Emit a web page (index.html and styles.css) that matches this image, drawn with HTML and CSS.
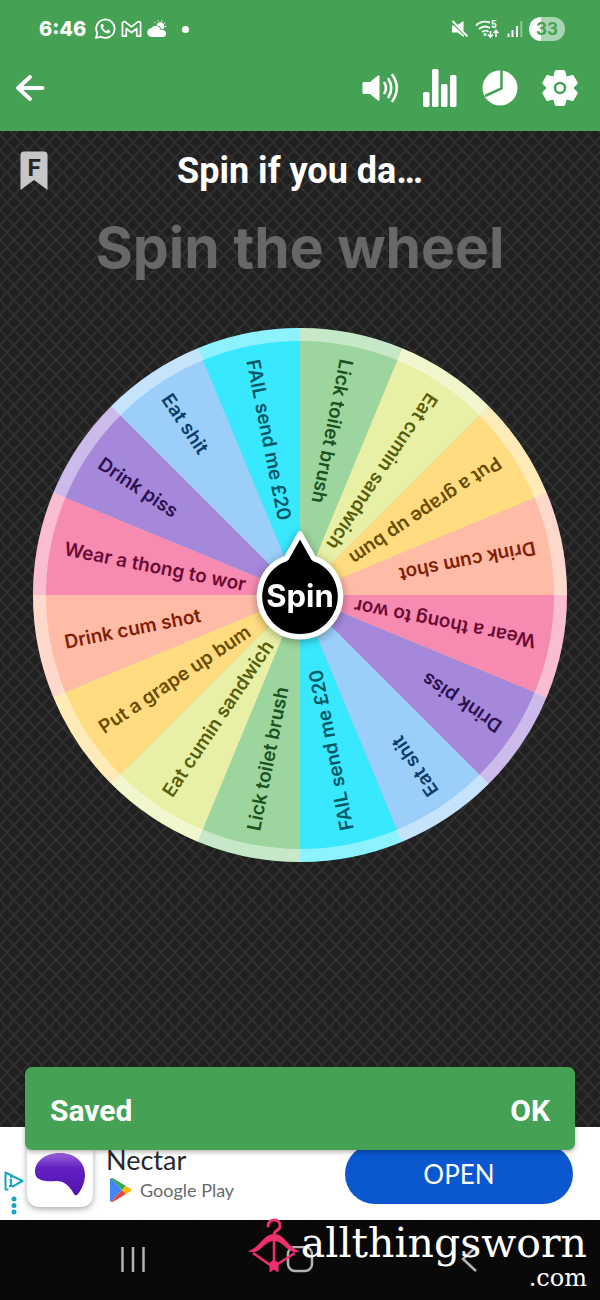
FILE: index.html
```html
<!doctype html>
<html lang="en">
<head>
<title>Spin the wheel</title>

<meta charset="utf-8">
<meta name="viewport" content="width=device-width, initial-scale=1">

<link rel="stylesheet" href="styles.css">
</head>

<body>

<header class="top">
	<div class="status-bar">
		<span class="clock">6:46</span>
		<svg class="status-icon" width="22" height="22" viewBox="0 0 22 22">
			<path d="M2 20l1.300-5A9.200 9.200 0 1 1 7 18.700z" fill="none" stroke="#fff" stroke-width="1.800" stroke-linejoin="round"/>
			<path d="M7.500 6c-1.500 1-1.300 3.200.3 5.400 2 2.800 4.600 4.400 6.700 3.800 1.600-.5 1.900-1.700 1.600-2.400l-2.300-1.200-1.300 1.400c-1.700-.6-3-2-3.600-3.300l1-1.300L8.900 6z" fill="#fff"/>
		</svg>
		<svg class="status-icon" width="21" height="18" viewBox="0 0 22 18">
			<path d="M1.500 3v13.500h4V8.500l5.500 4.300 5.500-4.300v8h4V3c0-1.800-2-2.200-3.300-1.200L11 6.800 4.800 1.800C3.500.8 1.500 1.200 1.500 3z" fill="none" stroke="#fff" stroke-width="1.800" stroke-linejoin="round"/>
		</svg>
		<svg class="status-icon" width="20" height="18" viewBox="0 0 20 18">
			<path d="M5 17a4.500 4.500 0 0 1-.5-9 5 5 0 0 1 9 2h2a3.500 3.500 0 0 1 0 7z" fill="#fff"/>
			<path d="M9.500 5.500a4 4 0 1 1 6.500 3.700h-1.500a6 6 0 0 0-5-3.700z" fill="#fff"/>
			<path d="M8.500 3l-1-1M11 1.500V.3M14.500 1.500l.5-1.200M17 3.500l1-.8M18 6.500h1.300" stroke="#fff" stroke-width="1"/>
		</svg>
		<span class="more-dot"></span>

		<span class="status-right">
			<svg width="18" height="18" viewBox="0 0 18 18">
				<path d="M1 5.500h2L13 15.500V17L6.500 12.500H1z" fill="#fff"/>
				<path d="M6.500 5L12.500 1v10z" fill="#fff"/>
				<path d="M1.500 1l15 15.500" stroke="#fff" stroke-width="1.800"/>
			</svg>
			<svg width="26" height="20" viewBox="0 0 26 20">
				<path d="M1 6.500C5 2.600 10 1.800 15 3.600M4 10c3-2.600 7-3.200 11-1M7 13c2-1.600 4.500-1.700 6.500-.3" fill="none" stroke="#fff" stroke-width="1.900"/>
				<circle cx="10" cy="15.500" r="1.500" fill="#fff"/>
				<path d="M15.500 12v6M13 15.500l2.500 2.700 2.500-2.700M21 18v-6M18.500 14l2.500-2.700L23.500 14" fill="none" stroke="#fff" stroke-width="1.500"/>
				<text class="wifi-gen" x="16" y="9">5</text>
			</svg>
			<svg width="16" height="18" viewBox="0 0 16 18">
				<path d="M1.500 13.500V17M5.500 10v7M10 6v11" stroke="#fff" stroke-width="2"/>
				<path d="M14.300 1v16" stroke="#fff" stroke-width="2" opacity=".4"/>
			</svg>
			<span class="battery">33</span>
		</span>
	</div>

	<nav class="toolbar">
		<button class="tool" type="button" aria-label="Back">
			<svg width="30" height="30" viewBox="0 0 30 30">
				<path d="M15 4L3 15l12 11M3.500 15H27.500" fill="none" stroke="#fff" stroke-width="3.800" stroke-linecap="round" stroke-linejoin="round"/>
			</svg>
		</button>
		<span class="spacer"></span>
		<button class="tool" type="button" aria-label="Sound">
			<svg width="38" height="38" viewBox="0 0 38 38">
				<path d="M3 13h6l8-6.500q1.500-1 1.500.7v23.600q0 1.700-1.500.7L9 25H3q-1.500 0-1.500-1.500v-9Q1.500 13 3 13z" fill="#fff"/>
				<path d="M23.500 14q3 5 0 10M27.500 10q5.500 9 0 18M31.500 6q8.500 13 0 26" fill="none" stroke="#fff" stroke-width="2.600" stroke-linecap="round"/>
			</svg>
		</button>
		<button class="tool" type="button" aria-label="Results">
			<svg width="38" height="38" viewBox="0 0 38 38">
				<g fill="#fff">
					<rect x="2" y="23" width="6.500" height="15" rx="1.800"/>
					<rect x="11" y="0" width="6.500" height="38" rx="1.800"/>
					<rect x="20" y="15" width="6.500" height="23" rx="1.800"/>
					<rect x="29" y="6" width="6.500" height="32" rx="1.800"/>
				</g>
			</svg>
		</button>
		<button class="tool" type="button" aria-label="Edit slices">
			<svg width="38" height="38" viewBox="0 0 38 38">
				<circle cx="19" cy="19" r="17.500" fill="#fff"/>
				<path d="M20.500 0v19.500L4 27" fill="none" stroke="#45a254" stroke-width="2.500"/>
			</svg>
		</button>
		<button class="tool" type="button" aria-label="Settings">
			<svg width="38" height="38" viewBox="0 0 38 38">
				<g fill="#fff" stroke="#fff" stroke-width="1" stroke-linejoin="round">
					<circle cx="19" cy="19" r="13"/>
					<path id="tooth" d="M12.500 9L14.300 2Q14.600 1.500 15.500 1.500h7q.9 0 1.200.5L25.500 9z"/>
					<use href="#tooth" transform="rotate(60 19 19)"/>
					<use href="#tooth" transform="rotate(120 19 19)"/>
					<use href="#tooth" transform="rotate(180 19 19)"/>
					<use href="#tooth" transform="rotate(240 19 19)"/>
					<use href="#tooth" transform="rotate(300 19 19)"/>
				</g>
				<circle cx="19" cy="19" r="5" fill="none" stroke="#45a254" stroke-width="2.500"/>
			</svg>
		</button>
	</nav>
</header>

<main class="content">
	<div class="wheel-head">
		<svg class="bookmark" width="28" height="40" viewBox="0 0 28 40">
			<path d="M4 0.500h20q3.500 0 3.500 3.500v35L14 29 .5 39V4Q.5.500 4 .5z" fill="#c6c6c6"/>
			<text class="bookmark-letter" x="14" y="25">F</text>
		</svg>
		<h2 class="wheel-name">Spin if you da…</h2>
	</div>

	<h1 class="prompt">Spin the wheel</h1>

	<div class="wheel-area">
		<svg class="wheel" viewBox="-267 -267 534 534">
			<defs>
				<path id="slice" d="M0 0L-261.870 -52.090A267 267 0 0 0 -261.870 52.090z"/>
			</defs>

			<!-- keeps the dark page from showing through the slice joints -->
			<circle class="base" r="266"/>

			<!-- every label starts near the rim and reads towards the hub -->
			<g class="peach" transform="rotate(-11.250)"><use href="#slice"/><text x="-240" y="7">Drink cum shot</text></g>
			<g class="yellow" transform="rotate(-33.750)"><use href="#slice"/><text x="-240" y="7">Put a grape up bum</text></g>
			<g class="lime" transform="rotate(-56.250)"><use href="#slice"/><text x="-240" y="7">Eat cumin sandwich</text></g>
			<g class="green" transform="rotate(-78.750)"><use href="#slice"/><text x="-240" y="7">Lick toilet brush</text></g>
			<g class="cyan" transform="rotate(-101.250)"><use href="#slice"/><text x="-240" y="7">FAIL send me £20</text></g>
			<g class="blue" transform="rotate(-123.750)"><use href="#slice"/><text x="-240" y="7">Eat shit</text></g>
			<g class="purple" transform="rotate(-146.250)"><use href="#slice"/><text x="-240" y="7">Drink piss</text></g>
			<g class="pink" transform="rotate(-168.750)"><use href="#slice"/><text x="-240" y="7">Wear a thong to wor</text></g>
			<g class="peach" transform="rotate(168.750)"><use href="#slice"/><text x="-240" y="7">Drink cum shot</text></g>
			<g class="yellow" transform="rotate(146.250)"><use href="#slice"/><text x="-240" y="7">Put a grape up bum</text></g>
			<g class="lime" transform="rotate(123.750)"><use href="#slice"/><text x="-240" y="7">Eat cumin sandwich</text></g>
			<g class="green" transform="rotate(101.250)"><use href="#slice"/><text x="-240" y="7">Lick toilet brush</text></g>
			<g class="cyan" transform="rotate(78.750)"><use href="#slice"/><text x="-240" y="7">FAIL send me £20</text></g>
			<g class="blue" transform="rotate(56.250)"><use href="#slice"/><text x="-240" y="7">Eat shit</text></g>
			<g class="purple" transform="rotate(33.750)"><use href="#slice"/><text x="-240" y="7">Drink piss</text></g>
			<g class="pink" transform="rotate(11.250)"><use href="#slice"/><text x="-240" y="7">Wear a thong to wor</text></g>

			<circle class="rim" r="260.500"/>
		</svg>

		<button class="spin" type="button">
			<svg width="100" height="132" viewBox="-50 -66 100 132">
				<path d="M0 -61L13.500 -37Q15 -36 20 -34A40.500 40.500 0 1 1 -20 -34Q-15 -36 -13.500 -37z" fill="#000" stroke="#fff" stroke-width="5.500" stroke-linejoin="round"/>
				<text class="spin-text" x="0" y="12">Spin</text>
			</svg>
		</button>
	</div>
</main>

<footer class="bottom">
	<section class="ad">
		<div class="ad-marks">
			<svg width="20" height="22" viewBox="0 0 20 22">
				<path d="M4.500 19.500h-3V2.500L18.500 11 8 16.800" fill="none" stroke="#18a5c0" stroke-width="2" stroke-linejoin="round"/>
				<path d="M7 6v2M5.500 10H7v6M5 16h4" fill="none" stroke="#18a5c0" stroke-width="2"/>
			</svg>
			<svg width="20" height="20" viewBox="0 0 20 20">
				<g fill="#18a5c0">
					<circle cx="10" cy="3" r="2.500"/>
					<circle cx="10" cy="9.500" r="2.500"/>
					<circle cx="10" cy="16" r="2.500"/>
				</g>
			</svg>
		</div>
		<div class="ad-icon">
			<svg width="66" height="66" viewBox="0 0 66 66">
				<defs>
					<linearGradient id="plum" x1="0" y1="0" x2="0" y2="1">
						<stop offset="0" stop-color="#9a63da"/>
						<stop offset=".35" stop-color="#6420c2"/>
						<stop offset="1" stop-color="#5312b0"/>
					</linearGradient>
				</defs>
				<path d="M8 31C8 19 20 12 33 12c15 0 25 9 25 22 0 9-5 17-8 20q-2 1-3-1c-5-9-10-13-18-13-10 1-21 0-21-9z" fill="url(#plum)"/>
			</svg>
		</div>
		<div class="ad-text">
			<span class="ad-name">Nectar</span>
			<span class="ad-store">
				<svg width="22" height="24" viewBox="0 0 22 24">
					<path d="M1 0L12 12 1 24Q0 23.500 0 22V2Q0 .5 1 0z" fill="#4285f4"/>
					<path d="M1 0q1-.3 2 .2L16 8l-4 4z" fill="#34a853"/>
					<path d="M1 24q1 .3 2-.2L16 16l-4-4z" fill="#ea4335"/>
					<path d="M16 8l5 3q1.300 1 0 2l-5 3-4-4z" fill="#fbbc04"/>
				</svg>
				Google Play
			</span>
		</div>
		<a class="ad-open" href="#">OPEN</a>
	</section>

	<div class="android-nav">
		<button class="nav-key" type="button" aria-label="Recents">
			<svg width="28" height="28" viewBox="0 0 28 28"><path d="M3.500 1v25M14 1v25M24.500 1v25" stroke="#b4b4b4" stroke-width="2.500"/></svg>
		</button>
		<button class="nav-key" type="button" aria-label="Home">
			<svg width="28" height="28" viewBox="0 0 28 28"><rect x="2" y="1" width="24" height="24" rx="7" fill="none" stroke="#b4b4b4" stroke-width="2.500"/></svg>
		</button>
		<button class="nav-key" type="button" aria-label="Back">
			<svg width="28" height="28" viewBox="0 0 28 28"><path d="M23 1L10 13l13 12" fill="none" stroke="#b4b4b4" stroke-width="2.500"/></svg>
		</button>
	</div>

	<div class="snackbar" role="status">
		<span>Saved</span>
		<button class="snackbar-ok" type="button">OK</button>
	</div>

	<div class="brand">
		<svg class="brand-mark" width="54" height="56" viewBox="0 0 54 56">
			<path d="M21 8c0-8 13-8 12 0 0 5-6 4-6 9" fill="none" stroke="#f0306c" stroke-width="3" stroke-linecap="round"/>
			<path d="M1 33C13 30 16 16 27 16s14 14 26 17c-3 2-8 1-11-1-6-5-9-9-15-9s-9 4-15 9c-3 2-8 3-11 1z" fill="#f0306c"/>
			<path d="M6 35l20 14L48 35M27 23v24" fill="none" stroke="#f0306c" stroke-width="2.500"/>
			<path d="M27 42l4 3v9l-4-3-4 3v-9z" fill="#f0306c" stroke="#f0306c"/>
		</svg>
		<div class="brand-text">
			<span class="brand-name">allthingsworn</span>
			<span class="brand-tld">.com</span>
		</div>
	</div>
</footer>

</body>
</html>
```

FILE: styles.css
```css
* {
	box-sizing: border-box;
}

body {
	display: flex;
	flex-direction: column;
	min-height: 100vh;
	margin: 0;
	font-family: Roboto, "Liberation Sans", sans-serif;
	color: #fff;
	background-color: #202020;
	background-image: url("data:image/svg+xml,%3Csvg xmlns='http://www.w3.org/2000/svg' width='14' height='15'%3E%3Cpath d='M-7 -7.500L21 22.500M21 -7.500L-7 22.500' stroke='%232f2f2f' stroke-width='2'/%3E%3C/svg%3E");
}

button {
	margin: 0;
	padding: 0;
	border: 0;
	background: none;
	color: inherit;
	font: inherit;
	cursor: pointer;
}

svg {
	display: block;
}

/* Green header */

.top {
	padding-bottom: 13px;
	background-color: #45a254;
}

.status-bar {
	display: flex;
	align-items: center;
	height: 58px;
	padding: 0 35px 0 39px;
}

.clock {
	margin-right: 8px;
	font-family: Inter, sans-serif;
	font-size: 20px;
	font-weight: 800;
}

.status-icon {
	margin-right: 5px;
}

.more-dot {
	width: 7px;
	height: 7px;
	margin-left: 10px;
	border-radius: 50%;
	background-color: #fff;
}

.status-right {
	display: flex;
	align-items: center;
	gap: 6px;
	margin-left: auto;
}

.wifi-gen {
	font-size: 10px;
	font-weight: 700;
	fill: #fff;
}

.battery {
	width: 36px;
	border-radius: 12px;
	background: linear-gradient(90deg, #fff 33%, #a9d5b0 33%);
	color: #45a254;
	font-family: Inter, sans-serif;
	font-size: 17px;
	font-weight: 700;
	line-height: 24px;
	text-align: center;
}

.toolbar {
	display: flex;
	padding-right: 10px;
}

.tool {
	display: grid;
	place-items: center;
	width: 60px;
	height: 60px;
}

.spacer {
	flex: 1;
}

/* Wheel */

.content {
	flex: 1;
}

.wheel-head {
	display: grid;
	grid-template-columns: 28px 1fr 28px;
	align-items: center;
	padding: 16px 20px 0;
}

.bookmark-letter {
	font-size: 24px;
	font-weight: 700;
	text-anchor: middle;
	fill: #252525;
}

.wheel-name {
	margin: 0;
	font-size: 36px;
	font-weight: 700;
	line-height: 48px;
	text-align: center;
}

.prompt {
	margin: 21px 0 48px;
	color: #676767;
	font-family: Inter, sans-serif;
	font-size: 57px;
	font-weight: 700;
	line-height: 64px;
	text-align: center;
}

.wheel-area {
	display: grid;
	place-items: center;
	padding: 0 33px;
}

.wheel,
.spin {
	grid-area: 1 / 1;
}

.wheel {
	width: 100%;
	font-family: Inter, sans-serif;
	font-size: 19px;
	font-weight: 600;
}

.base { fill: #c9c4b8; }

.peach { fill: #ffbba5; }
.yellow { fill: #ffdc80; }
.lime { fill: #e8f0a5; }
.green { fill: #9cd69e; }
.cyan { fill: #38e8ff; }
.blue { fill: #9bcef9; }
.purple { fill: #a688da; }
.pink { fill: #f68ab0; }

.peach text { fill: #7f1d06; }
.yellow text { fill: #6a4b00; }
.lime text { fill: #585e0e; }
.green text { fill: #1c5222; }
.cyan text { fill: #035866; }
.blue text { fill: #0c3d68; }
.purple text { fill: #2b1052; }
.pink text { fill: #690a33; }

.rim {
	fill: none;
	stroke: #fff;
	stroke-opacity: 0.43;
	stroke-width: 13px;
}

.spin {
	filter: drop-shadow(0 2px 5px rgba(0, 0, 0, 0.35));
}

.spin-text {
	font-family: Inter, sans-serif;
	font-size: 31px;
	font-weight: 700;
	text-anchor: middle;
	fill: #fff;
}

/* Ad, system keys and what lies over them */

.bottom {
	position: relative;
}

.ad {
	display: flex;
	align-items: center;
	height: 93px;
	padding: 0 27px 0 4px;
	background-color: #fff;
	font-family: Lato, sans-serif;
}

.ad-marks {
	align-self: flex-end;
	width: 23px;
	padding-bottom: 4px;
}

.ad-marks svg + svg {
	margin-top: 4px;
}

.ad-icon {
	border-radius: 12px;
	box-shadow: 0 2px 6px rgba(0, 0, 0, 0.35);
}

.ad-text {
	display: flex;
	flex-direction: column;
	margin-left: 13px;
}

.ad-name {
	color: #27282c;
	font-size: 27px;
	line-height: 32px;
}

.ad-store {
	display: flex;
	align-items: center;
	gap: 8px;
	margin-left: 4px;
	color: #66696e;
	font-size: 18px;
	line-height: 28px;
}

.ad-open {
	width: 228px;
	margin-left: auto;
	border-radius: 30px;
	background-color: #0b57d0;
	color: #fff;
	font-size: 26px;
	line-height: 60px;
	text-align: center;
	text-decoration: none;
}

.android-nav {
	display: flex;
	justify-content: center;
	gap: 139px;
	height: 80px;
	background-color: rgba(4, 4, 4, 0.88);
}

.nav-key {
	display: grid;
	place-items: center;
	width: 28px;
}

.snackbar {
	position: absolute;
	right: 25px;
	bottom: 150px;
	left: 25px;
	display: flex;
	align-items: center;
	justify-content: space-between;
	height: 83px;
	padding: 3px 25px 0;
	border-radius: 7px;
	background-color: #45a254;
	box-shadow: 0 2px 5px rgba(0, 0, 0, 0.3);
	font-size: 30px;
	font-weight: 700;
}

.brand {
	position: absolute;
	right: 13px;
	bottom: 12px;
	display: flex;
	pointer-events: none;
}

.brand-text {
	display: flex;
	flex-direction: column;
	align-items: flex-end;
	font-family: "DejaVu Serif", serif;
}

.brand-name {
	font-size: 41px;
	line-height: 50px;
}

.brand-tld {
	font-size: 24px;
	line-height: 20px;
}
```
